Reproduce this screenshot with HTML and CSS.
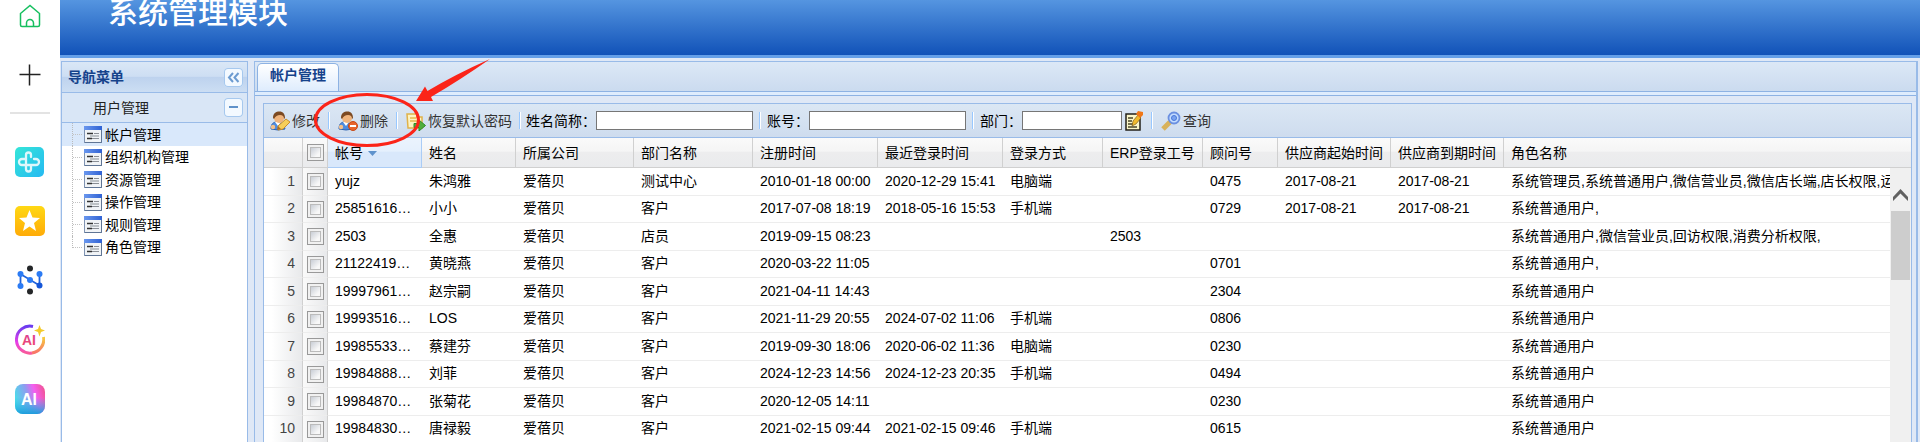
FILE: index.html
```html
<!DOCTYPE html>
<html lang="zh-CN">
<head>
<meta charset="utf-8">
<title>系统管理模块</title>
<link rel="stylesheet" href="styles.css">
</head>
<body>
<svg class="defs" aria-hidden="true">
  <defs>
    <linearGradient id="cyan" x2="1" y2="1"><stop stop-color="#35e6d8"/><stop offset="1" stop-color="#25b9f2"/></linearGradient>
    <linearGradient id="gold" x2="0" y2="1"><stop stop-color="#ffd814"/><stop offset="1" stop-color="#ffab08"/></linearGradient>
    <linearGradient id="ring" x2="0" y2="1"><stop stop-color="#6a3cf0"/><stop offset=".6" stop-color="#e83ee8"/><stop offset="1" stop-color="#f85a9a"/></linearGradient>
    <linearGradient id="ringb" x2="0" y2="1"><stop stop-color="#f6cf3a"/><stop offset="1" stop-color="#f8746a"/></linearGradient>
    <linearGradient id="pink" x2="0" y2="1"><stop stop-color="#d8409c"/><stop offset="1" stop-color="#f04a6c"/></linearGradient>
    <linearGradient id="aqua" x1="0" y1=".6" x2="1" y2=".3"><stop stop-color="#45e2ea"/><stop offset=".45" stop-color="#8f9cf0"/><stop offset=".7" stop-color="#f45ff0"/><stop offset="1" stop-color="#f0559c"/></linearGradient>
    <linearGradient id="sea" x2="0" y2="1"><stop offset=".45" stop-color="#2fb5e6" stop-opacity="0"/><stop offset="1" stop-color="#1e9cdc"/></linearGradient>
    <linearGradient id="bar" x2="1"><stop stop-color="#6a97ee"/><stop offset="1" stop-color="#2f62d4"/></linearGradient>
    <symbol id="page" viewBox="0 0 18 17">
      <rect x=".5" y=".5" width="17" height="16" fill="#f1f4f7" stroke="#7f93b2"/>
      <path d="M17.500 4v12.500H1" fill="none" stroke="#5f7595"/>
      <rect width="18" height="4" fill="url(#bar)"/>
      <path d="M3 7.500h6M3 12.500h5" stroke="#333" stroke-width="1.500"/>
      <path d="M10 7.500h5M6 10h9M8 12.500h7" stroke="#8a8f96" stroke-width="1.200"/>
    </symbol>
    <symbol id="person" viewBox="0 0 20 20">
      <path d="M1 18c0-5 2-7 6-7s7 2 8 7q-7 2-14 0z" fill="#4e8ce0" stroke="#2d62b0"/>
      <path d="M5 11l3 4 3-4z" fill="#fff"/>
      <circle cx="9" cy="7" r="5" fill="#f0b47c"/>
      <path d="M3 7C3 2 6 .5 9.500.5S15 3 15 7l-1 1q0-4-4-4-4 0-6 4z" fill="#7c4a22"/>
      <circle cx="3" cy="16" r="2.200" fill="#f3c08c"/>
    </symbol>
  </defs>
</svg>
<div class="app">
  <aside class="rail">
    <a href="#" aria-label="主页"><svg width="22" height="24" viewBox="0 0 22 24" fill="none" stroke="#16bf5f" stroke-width="1.500"><path d="M1.500 9.500 11 1.500l9.500 8V21q0 1.500-1.500 1.500H3q-1.500 0-1.500-1.500zM7.500 22.500V19a3.500 3.500 0 0 1 7 0v3.500"/></svg></a>
    <a href="#" aria-label="新建" class="rail-add"><svg width="22" height="22" viewBox="0 0 22 22" stroke="#222" stroke-width="1.500"><path d="M.5 10.500h21M10.500.5v21"/></svg></a>
    <hr>
    <a href="#" aria-label="健康"><svg width="30" height="30" viewBox="0 0 30 30"><rect width="29" height="30" rx="5" fill="url(#cyan)"/><path d="M16 10.500V8.500a2.500 2.500 0 0 0-5 0v14a2.500 2.500 0 0 0 5 0V19M11 12.500H7a3 3 0 0 0 0 6h14a3 3 0 0 0 0-6h-2" transform="translate(0 -.5)" fill="none" stroke="#def7fb" stroke-width="2.300" stroke-linecap="round"/></svg></a>
    <a href="#" aria-label="收藏"><svg width="30" height="30" viewBox="0 0 30 30"><rect width="30" height="30" rx="5" fill="url(#gold)"/><path d="m14.500 4 3 7.500 7.500.5-6 5 2 8-6.500-4.500L8 25l2-8-6-5 7.500-.5z" fill="#fff"/></svg></a>
    <a href="#" aria-label="网络"><svg width="30" height="30" viewBox="0 0 30 30"><path d="M5.500 21V9l19 11.500V9" fill="none" stroke="#1f62dc" stroke-width="1.800"/><g fill="#2b7bf4"><circle cx="5.500" cy="9" r="3"/><circle cx="15" cy="15" r="3"/><circle cx="24.500" cy="9" r="3"/><circle cx="5.500" cy="21" r="3"/></g><circle cx="24.500" cy="20.500" r="3" fill="#1556d8"/><circle cx="15" cy="3.500" r="3" fill="#242628"/><circle cx="15" cy="26.500" r="3" fill="#242628"/></svg></a>
    <a href="#" aria-label="AI 创作"><svg width="30" height="31" viewBox="0 0 30 31"><path d="M18 2.500A13.500 13.500 0 1 0 17 29" fill="none" stroke="url(#ring)" stroke-width="3"/><path d="M17 29A13.500 13.500 0 0 0 28.500 13" fill="none" stroke="url(#ringb)" stroke-width="3"/><path d="m24.500 1 1.500 4 4 1.500-4 1.500-1.500 4.500L23 8l-4-1.500L23 5z" fill="#f3cb2c"/><text x="7" y="20.500" class="ai-mark ai-mark-pink">AI</text></svg></a>
    <a href="#" aria-label="AI 助手"><svg width="30" height="30" viewBox="0 0 30 30"><rect width="30" height="30" rx="8" fill="url(#aqua)"/><rect width="30" height="30" rx="8" fill="url(#sea)"/><text x="6" y="21" class="ai-mark ai-mark-white">AI</text></svg></a>
  </aside>
  <div class="workspace">
    <header class="banner"><h1>系统管理模块</h1></header>
    <div class="panes">
      <nav class="nav" aria-label="导航菜单">
        <div class="nav-head"><h2>导航菜单</h2><button class="tool" aria-label="收起"><svg width="19" height="19" viewBox="0 0 19 19" fill="none" stroke="#6c9bd0" stroke-width="2"><path d="m9 5-4 4.500L9 14M14.500 5l-4 4.500 4 4.500"/></svg></button></div>
        <div class="nav-group"><h3>用户管理</h3><button class="tool" aria-label="折叠"><svg width="19" height="19" viewBox="0 0 19 19"><path d="M5 9h9" stroke="#5f92ca" stroke-width="2"/></svg></button></div>
        <ul class="tree">
          <li><a href="#" class="current"><svg><use href="#page"/></svg>帐户管理</a></li>
          <li><a href="#"><svg><use href="#page"/></svg>组织机构管理</a></li>
          <li><a href="#"><svg><use href="#page"/></svg>资源管理</a></li>
          <li><a href="#"><svg><use href="#page"/></svg>操作管理</a></li>
          <li><a href="#"><svg><use href="#page"/></svg>规则管理</a></li>
          <li><a href="#"><svg><use href="#page"/></svg>角色管理</a></li>
        </ul>
      </nav>
      <main class="main">
        <div class="tabs"><a href="#" class="tab">帐户管理</a></div>
        <div class="tab-line"></div>
        <section class="grid">
          <div class="toolbar">
            <button class="action"><svg viewBox="0 0 20 20"><use href="#person"/><path d="m8 15 8-7 4 3-7 7-5 1z" fill="#f7cf5a" stroke="#c98f2c"/><path d="m8 15 3 3-4 1z" fill="#a66a2a"/></svg>修改</button>
            <span class="sep"></span>
            <button class="action"><svg viewBox="0 0 20 20"><use href="#person"/><circle cx="15" cy="15" r="4.500" fill="#e8642c" stroke="#c64a18"/><path d="M12 15h6" stroke="#fff" stroke-width="2"/></svg>删除</button>
            <span class="sep"></span>
            <button class="action"><svg viewBox="0 0 20 20"><path d="M1 3h10v3h5v11H2z" fill="#fdf3c2" stroke="#e0b24a" stroke-width="1.500"/><path d="M4 7h6M4 10h8" stroke="#ecc66a" stroke-width="2"/><path d="M8 12.500h5V9l6.500 5.500L13 20v-3.500H8z" fill="#4fae3c" stroke="#2f8a2a"/></svg>恢复默认密码</button>
            <span class="sep sep-tight"></span>
            <label for="name">姓名简称：</label><input id="name" type="text">
            <span class="sep"></span>
            <label for="account">账号：</label><input id="account" type="text">
            <span class="sep"></span>
            <label for="dept">部门：</label><input id="dept" type="text" class="short">
            <button class="pick" aria-label="选择部门"><svg width="18" height="20" viewBox="0 0 18 20"><path d="M1 3h14v16H1z" fill="#fbf7c9" stroke="#23201a" stroke-width="1.500"/><path d="M3 7h5M3 10h4M3 13h5M3 16h9" stroke="#4a4628" stroke-width="1.500"/><path d="m7 15 1-5 5-6 3 3-5 6z" fill="#f0ba2c" stroke="#6a4a18" stroke-width=".6"/><path d="m11 3 2-3 5 1v3l-3 3z" fill="#f07818"/></svg></button>
            <span class="sep"></span>
            <button class="action"><svg viewBox="0 0 20 20"><path d="m2 18 7-7" stroke="#d8b25c" stroke-width="5"/><circle cx="13" cy="7" r="5.500" fill="#c3dcff" stroke="#6b90e0" stroke-width="1.800"/><circle cx="13" cy="7" r="2.500" fill="#7ba4f0" stroke="#4a78d8"/></svg>查询</button>
          </div>
          <div class="grid-body">
            <table>
              <colgroup><col class="w-num"><col class="w-check"><col class="w-acct"><col class="w-name"><col class="w-comp"><col class="w-dept"><col class="w-time"><col class="w-time"><col class="w-mode"><col class="w-mode"><col class="w-adv"><col class="w-date"><col class="w-date"><col></colgroup>
              <thead><tr><th></th><th class="check"><input type="checkbox" aria-label="全选"></th><th class="sorted">帐号<svg width="9" height="5" viewBox="0 0 9 5"><path d="M0 0h9L4.500 5z" fill="#5f93cd"/></svg></th><th>姓名</th><th>所属公司</th><th>部门名称</th><th>注册时间</th><th>最近登录时间</th><th>登录方式</th><th>ERP登录工号</th><th>顾问号</th><th>供应商起始时间</th><th>供应商到期时间</th><th>角色名称</th></tr></thead>
              <tbody>
                <tr><td class="num">1</td><td class="check"><input type="checkbox" aria-label="选择 1"></td><td>yujz</td><td>朱鸿雅</td><td>爱蓓贝</td><td>测试中心</td><td>2010-01-18 00:00</td><td>2020-12-29 15:41</td><td>电脑端</td><td></td><td>0475</td><td>2017-08-21</td><td>2017-08-21</td><td>系统管理员,系统普通用户,微信营业员,微信店长端,店长权限,运营</td></tr>
                <tr><td class="num">2</td><td class="check"><input type="checkbox" aria-label="选择 2"></td><td>25851616…</td><td>小小</td><td>爱蓓贝</td><td>客户</td><td>2017-07-08 18:19</td><td>2018-05-16 15:53</td><td>手机端</td><td></td><td>0729</td><td>2017-08-21</td><td>2017-08-21</td><td>系统普通用户,</td></tr>
                <tr><td class="num">3</td><td class="check"><input type="checkbox" aria-label="选择 3"></td><td>2503</td><td>全惠</td><td>爱蓓贝</td><td>店员</td><td>2019-09-15 08:23</td><td></td><td></td><td>2503</td><td></td><td></td><td></td><td>系统普通用户,微信营业员,回访权限,消费分析权限,</td></tr>
                <tr><td class="num">4</td><td class="check"><input type="checkbox" aria-label="选择 4"></td><td>21122419…</td><td>黄晓燕</td><td>爱蓓贝</td><td>客户</td><td>2020-03-22 11:05</td><td></td><td></td><td></td><td>0701</td><td></td><td></td><td>系统普通用户,</td></tr>
                <tr><td class="num">5</td><td class="check"><input type="checkbox" aria-label="选择 5"></td><td>19997961…</td><td>赵宗嗣</td><td>爱蓓贝</td><td>客户</td><td>2021-04-11 14:43</td><td></td><td></td><td></td><td>2304</td><td></td><td></td><td>系统普通用户</td></tr>
                <tr><td class="num">6</td><td class="check"><input type="checkbox" aria-label="选择 6"></td><td>19993516…</td><td>LOS</td><td>爱蓓贝</td><td>客户</td><td>2021-11-29 20:55</td><td>2024-07-02 11:06</td><td>手机端</td><td></td><td>0806</td><td></td><td></td><td>系统普通用户</td></tr>
                <tr><td class="num">7</td><td class="check"><input type="checkbox" aria-label="选择 7"></td><td>19985533…</td><td>蔡建芬</td><td>爱蓓贝</td><td>客户</td><td>2019-09-30 18:06</td><td>2020-06-02 11:36</td><td>电脑端</td><td></td><td>0230</td><td></td><td></td><td>系统普通用户</td></tr>
                <tr><td class="num">8</td><td class="check"><input type="checkbox" aria-label="选择 8"></td><td>19984888…</td><td>刘菲</td><td>爱蓓贝</td><td>客户</td><td>2024-12-23 14:56</td><td>2024-12-23 20:35</td><td>手机端</td><td></td><td>0494</td><td></td><td></td><td>系统普通用户</td></tr>
                <tr><td class="num">9</td><td class="check"><input type="checkbox" aria-label="选择 9"></td><td>19984870…</td><td>张菊花</td><td>爱蓓贝</td><td>客户</td><td>2020-12-05 14:11</td><td></td><td></td><td></td><td>0230</td><td></td><td></td><td>系统普通用户</td></tr>
                <tr><td class="num">10</td><td class="check"><input type="checkbox" aria-label="选择 10"></td><td>19984830…</td><td>唐禄毅</td><td>爱蓓贝</td><td>客户</td><td>2021-02-15 09:44</td><td>2021-02-15 09:46</td><td>手机端</td><td></td><td>0615</td><td></td><td></td><td>系统普通用户</td></tr>
              </tbody>
            </table>
            <div class="scrollbar"><svg width="15" height="12" viewBox="0 0 15 12"><path d="M0 8 7.500 0 15 8v4L7.500 4.500 0 12z" fill="#606060"/></svg><div class="thumb"></div></div>
          </div>
        </section>
      </main>
    </div>
  </div>
  <svg class="callout" width="180" height="92" viewBox="0 0 180 92" aria-hidden="true"><ellipse cx="53" cy="62" rx="51.500" ry="25.500" fill="none" stroke="#fb2419" stroke-width="3"/><path d="M176 1Q142 16 113.500 33L111 28.500 102 43h17l-2-4Q146 22 176 1z" fill="#fb2419"/></svg>
</div>
</body>
</html>
```
FILE: styles.css
```css
* { box-sizing: border-box; }
html, body { height: 100%; }
body {
  margin: 0;
  overflow: hidden;
  background: #fff;
  color: #000;
  font: 14px/20px "Liberation Sans", Arial, "Noto Sans CJK SC", sans-serif;
}
h1, h2, h3, ul { margin: 0; padding: 0; font-weight: normal; }
h2, h3 { font-size: 14px; }
a { color: inherit; text-decoration: none; }
button { padding: 0; border: 0; background: none; color: inherit; font: inherit; }
svg { display: block; flex: none; }
.defs { position: absolute; width: 0; height: 0; }

.app { position: relative; display: flex; height: 100%; }

.rail {
  display: flex;
  flex: none;
  flex-direction: column;
  align-items: center;
  gap: 29px;
  width: 60px;
  padding-top: 4px;
}
.rail-add { margin: 7px 0 -3px; }
.rail hr { width: 40px; height: 2px; margin: 0 0 4px; border: 0; background: #e3e3e3; }
.rail a { flex: none; }
.ai-mark { font: bold 15px "Liberation Sans", Arial, sans-serif; }
.ai-mark-pink { font-size: 14px; fill: url(#pink); }
.ai-mark-white { font-size: 16px; fill: #fff; }

.workspace {
  display: flex;
  flex: 1;
  flex-direction: column;
  min-width: 0;
  background: #dfe8f6;
}
.banner {
  flex: none;
  height: 58px;
  padding-left: 48px;
  border-bottom: 3px solid #649fe8;
  background: linear-gradient(#5595e0, #1152b8);
}
.banner h1 { color: #fff; font-size: 30px; font-weight: 500; line-height: 25px; }
.panes { display: flex; flex: 1; gap: 6px; min-height: 0; padding: 3px 2px 0 1px; }

.nav {
  flex: none;
  width: 187px;
  border: 1px solid #99bbe8;
  border-bottom: 0;
  background: #fff;
}
.nav-head, .nav-group {
  display: flex;
  align-items: center;
  justify-content: space-between;
  height: 31px;
  padding: 0 4px 0 6px;
  border-bottom: 1px solid #99bbe8;
}
.nav-head { background: linear-gradient(#dae7f6, #cddef3 48%, #bdd2ee 50%, #ccdef3); }
.nav-head h2 { color: #15428b; font-weight: bold; }
.nav-group { height: 30px; padding-left: 31px; background: #d9e6f6; color: #222; }
.tool { width: 19px; height: 19px; border-radius: 4px; background: #f3f9ff; box-shadow: inset 0 0 0 1px #a6c8ee; }

.tree { list-style: none; }
.tree a { display: flex; align-items: center; gap: 3px; height: 23px; padding-left: 10px; }
.tree li:nth-child(even) a { height: 22px; }
.tree a::before { content: ""; width: 11px; height: 23px; margin-right: -3px; border-left: 1px dotted #bbb; background: repeating-linear-gradient(90deg, #c4c4c4 0 1px, transparent 1px 2px) 0 11px / 9px 1px no-repeat; }
.tree li:last-child a::before { height: 12px; align-self: flex-start; }
.tree svg { width: 18px; height: 17px; }
.tree .current { background: #d9e8fb; }

.main {
  display: flex;
  flex: 1;
  flex-direction: column;
  min-width: 0;
  border: solid #99bbe8;
  border-width: 1px 2px 0 1px;
}
.tabs { display: flex; align-items: flex-end; height: 29px; padding-left: 2px; background: linear-gradient(#dce8f6, #cbdbef); }
.tab {
  height: 28px;
  padding: 0 12px;
  border: 1px solid #8db2e3;
  border-bottom: 0;
  border-radius: 5px 5px 0 0;
  background: linear-gradient(#fff, #deecfd);
  color: #15428b;
  font-weight: bold;
  line-height: 22px;
}
.tab-line { flex: none; height: 5px; border: solid #8db2e3; border-width: 1px 0; background: #deecfd; }
.grid {
  display: flex;
  flex: 1;
  flex-direction: column;
  min-height: 0;
  margin: 7px 4px 0 8px;
  border: 1px solid #99bbe8;
  border-bottom: 0;
}
.toolbar {
  display: flex;
  flex: none;
  align-items: center;
  height: 34px;
  padding: 0 6px;
  border-bottom: 1px solid #99bbe8;
  background: linear-gradient(#dbe7f4, #cedcee);
}
.action { display: flex; align-items: center; gap: 2px; color: #333; }
.action svg { width: 20px; height: 20px; }
.sep { flex: none; width: 2px; height: 17px; margin: 0 8px; border-left: 1px solid #98c8ff; border-right: 1px solid #fff; }
.sep-tight { margin: 0 7px; }
.toolbar label { width: 70px; margin-left: -2px; white-space: nowrap; }
.toolbar label[for="account"], .toolbar label[for="dept"] { width: 42px; }
.toolbar input { width: 157px; height: 19px; margin-right: -2px; padding: 0 3px; border: 1px solid #767676; outline: 0; background: #fff; font: inherit; }
.toolbar .short { width: 100px; margin-right: 3px; }

.grid-body { position: relative; flex: 1; min-height: 0; overflow: hidden; background: #fff; }
table { width: 100%; border-collapse: separate; border-spacing: 0; table-layout: fixed; }
.w-num { width: 39px; }
.w-check { width: 25px; }
.w-acct { width: 94px; }
.w-name { width: 94px; }
.w-comp { width: 118px; }
.w-dept { width: 119px; }
.w-time { width: 125px; }
.w-mode { width: 100px; }
.w-adv { width: 75px; }
.w-date { width: 113px; }
th, td { overflow: hidden; padding: 0 0 0 7px; text-align: left; white-space: nowrap; }
th { height: 30px; border-right: 1px solid #d0d0d0; border-bottom: 1px solid #d0d0d0; background: linear-gradient(#fafafa, #f5f5f5 45%, #ededee 50%, #eaebed); font-weight: normal; }
th:last-child { border-right: 0; }
th.sorted { border-color: #aaccf6; background: linear-gradient(#ebf3fd, #e5f0fd 45%, #d9e8fb 50%); }
th svg { display: inline-block; margin-left: 5px; vertical-align: middle; }
td { height: 28px; padding-bottom: 2px; border-bottom: 1px solid #ededed; line-height: 18px; }
tbody tr:nth-child(even) td { height: 27px; }
td.num { padding: 0 7px 2px 0; border-right: 1px solid #d0d0d0; background: linear-gradient(90deg, #fff 20%, #e8e9eb); color: #444; text-align: right; }
th.check, td.check { padding: 0 0 0 4px; }
td.check { border-right: 1px solid #d0d0d0; background: linear-gradient(90deg, #fafafa, #e8e9eb); }
.check input { display: block; width: 17px; height: 17px; margin: 0; appearance: none; border: 1px solid #999; background: linear-gradient(135deg, #c9ced6, #f8f8f8 75%) 3px 3px / 9px 9px no-repeat, #f1f1f1; box-shadow: inset 0 0 0 2px #f1f1f1, inset 0 0 0 3px #bbb; }

.scrollbar { position: absolute; top: 30px; right: 0; bottom: 0; display: flex; flex-direction: column; align-items: center; gap: 10px; width: 21px; padding-top: 21px; background: #f0f0f0; }
.thumb { width: 19px; height: 69px; background: #cdcdcd; }

.callout { position: absolute; top: 58px; left: 314px; pointer-events: none; }
```
